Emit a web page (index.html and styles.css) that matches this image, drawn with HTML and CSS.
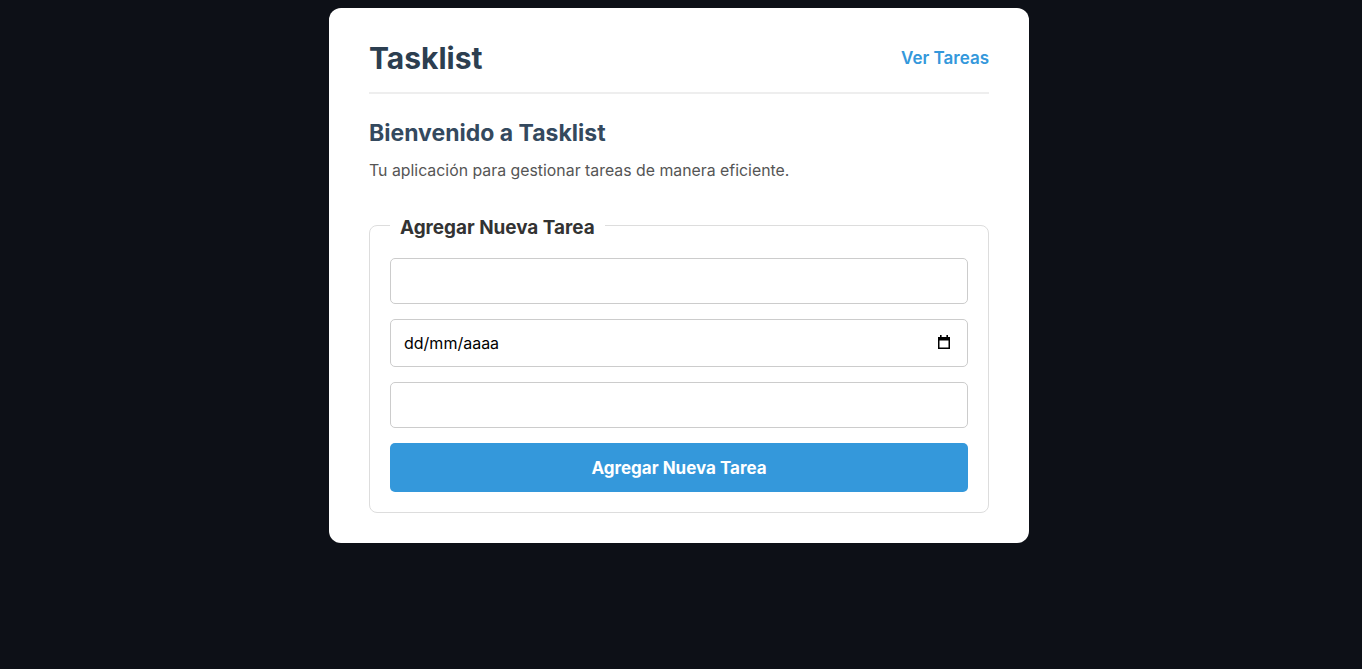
FILE: index.html
```html
<!DOCTYPE html>
<html lang="es">
<head>
<meta charset="utf-8">
<title>Tasklist</title>
<link rel="stylesheet" href="styles.css">
</head>
<body>
<div class="card">
  <header class="header">
    <h1 class="brand">Tasklist</h1>
    <a class="nav-link" href="#">Ver Tareas</a>
  </header>
  <main>
    <h2 class="welcome">Bienvenido a Tasklist</h2>
    <p class="intro">Tu aplicación para gestionar tareas de manera eficiente.</p>
    <form class="task-form">
      <fieldset class="fieldset">
        <legend class="legend">Agregar Nueva Tarea</legend>
        <input class="field" type="text">
        <div class="date-wrap">
          <input class="field date" type="text" placeholder="dd/mm/aaaa">
          <svg class="cal-icon" width="12" height="14" viewBox="0 0 12 14" aria-hidden="true">
            <rect x="2" y="0" width="1.6" height="3" fill="#000"/>
            <rect x="8.4" y="0" width="1.6" height="3" fill="#000"/>
            <path d="M0 2h12v12H0z M1.5 5.5v7h9v-7z" fill="#000" fill-rule="evenodd"/>
          </svg>
        </div>
        <input class="field" type="text">
        <button class="submit" type="button">Agregar Nueva Tarea</button>
      </fieldset>
    </form>
  </main>
</div>
</body>
</html>
```

FILE: styles.css
```css
html, body {
  background: #0d1017;
}
body {
  margin: 8px 12px 8px 8px;
  font-family: Inter, "Noto Sans", sans-serif;
}
.card {
  width: 700px;
  box-sizing: border-box;
  margin: 0 auto;
  background: #fff;
  border-radius: 12px;
  padding: 30px 40px 30px;
}
.header {
  display: flex;
  justify-content: space-between;
  align-items: center;
  border-bottom: 2px solid #eee;
  padding-bottom: 14px;
}
.brand {
  margin: 0;
  font-size: 30px;
  font-weight: 700;
  color: #2c3e50;
  line-height: 40px;
}
.nav-link {
  color: #3498db;
  text-decoration: none;
  font-weight: 600;
  font-size: 17px;
  margin-right: 0;
}
.welcome {
  margin: 25px 0 0;
  font-size: 23px;
  font-weight: 700;
  color: #34495e;
  line-height: 28px;
}
.intro {
  margin: 14px 0 0;
  font-size: 15.85px;
  color: #555;
  line-height: 20px;
}
.task-form {
  margin-top: 31px;
}
.fieldset {
  margin: 0;
  border: 1px solid #ddd;
  border-radius: 8px;
  padding: 19px 20px 20px;
  display: flex;
  flex-direction: column;
  gap: 15px;
}
.legend {
  font-size: 18.9px;
  font-weight: 700;
  color: #333;
  padding: 4px 10px 0;
  margin-left: 0;
}
.field {
  width: 100%;
  height: 46px;
  box-sizing: border-box;
  border: 1px solid #ccc;
  border-radius: 5px;
  padding: 10px 12px;
  font-family: Inter, "Noto Sans", sans-serif;
  font-size: 16px;
  background: #fff;
  color: #000;
  display: block;
}
.date-wrap {
  position: relative;
}
.date {
  height: 48px;
  padding-left: 13px;
}
.date::placeholder {
  color: #000;
  opacity: 1;
}
.cal-icon {
  position: absolute;
  right: 18px;
  top: 16px;
}
.submit {
  height: 49px;
  border: none;
  border-radius: 5px;
  background: #3498db;
  color: #fff;
  font-family: Inter, "Noto Sans", sans-serif;
  font-size: 17px;
  font-weight: 700;
  cursor: pointer;
}
```
